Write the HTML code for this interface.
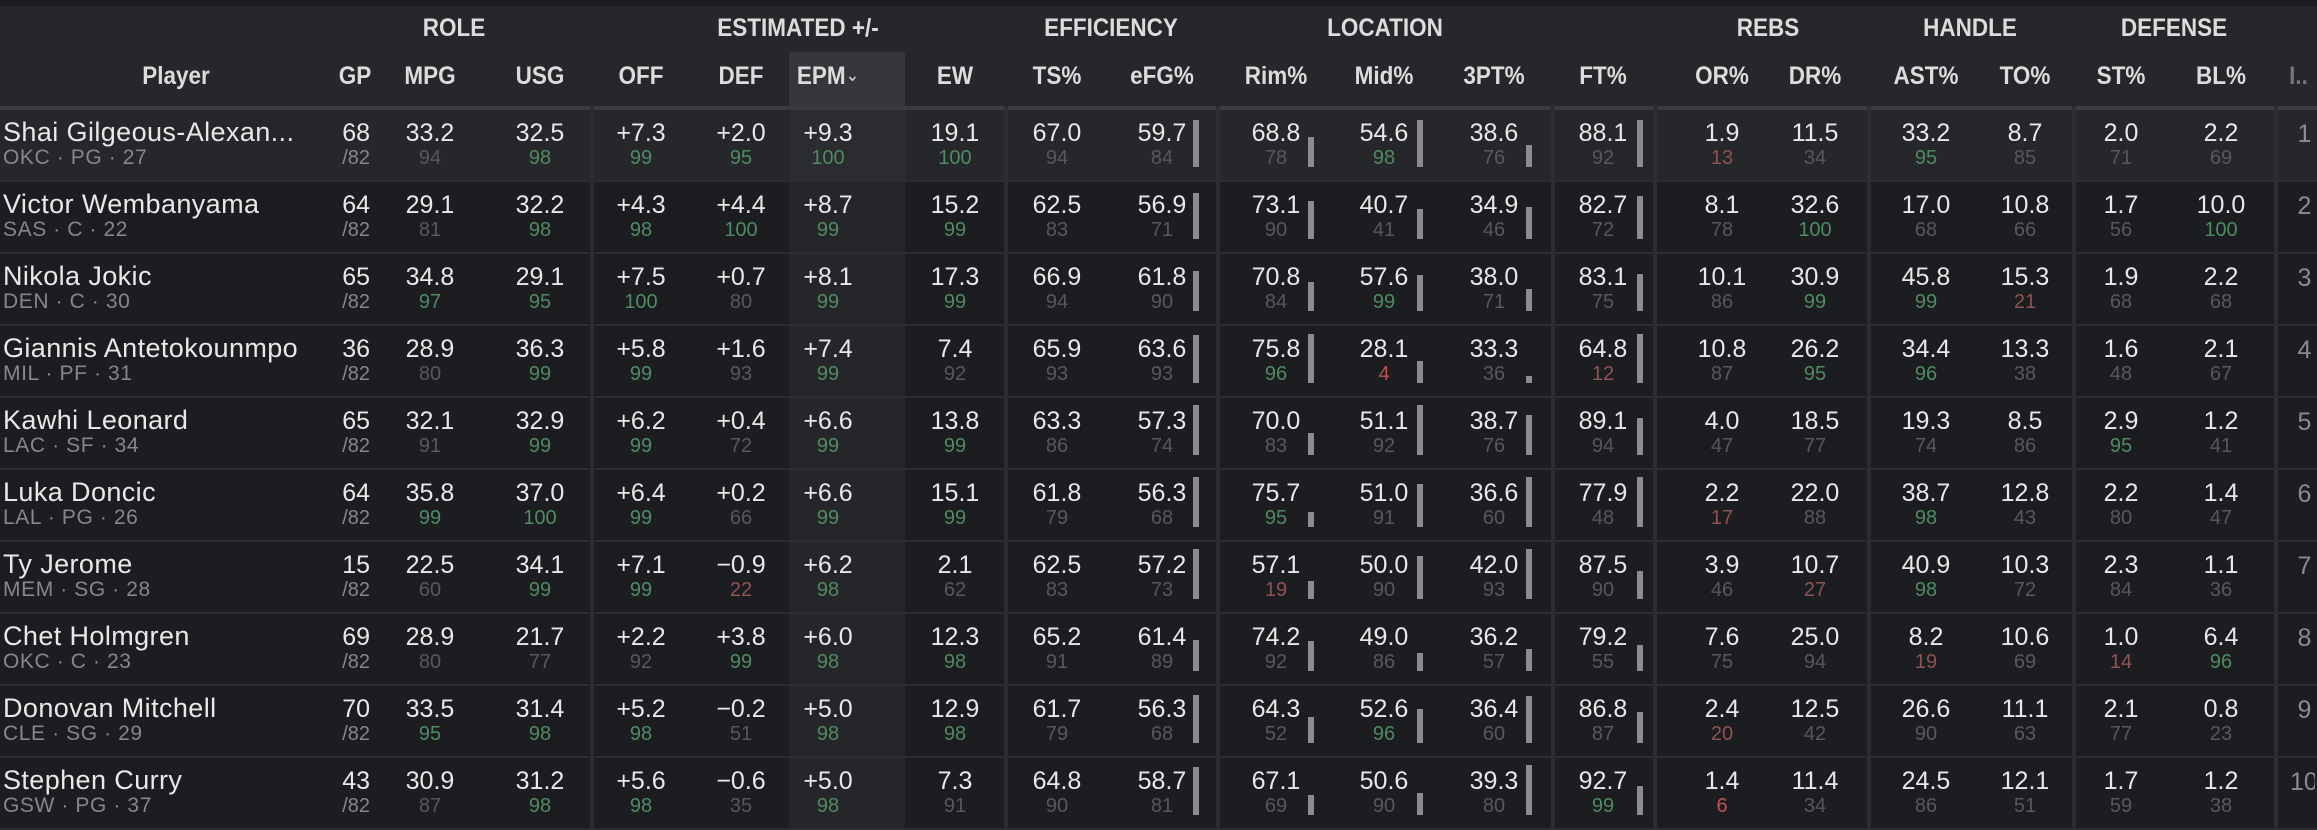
<!DOCTYPE html>
<html><head><meta charset="utf-8"><style>
*{margin:0;padding:0;box-sizing:border-box}
html,body{width:2317px;height:830px;overflow:hidden}
body{background:#2c2d31;font-family:"Liberation Sans",sans-serif;position:relative;color:#e8e8e8}
.top{position:absolute;left:0;top:0;width:2317px;height:6px;background:#1b1c1f}
.hd{position:absolute;left:0;top:6px;width:2317px;height:100px;background:#26272a}
.gh{position:absolute;top:14px;font-size:25px;color:#dcdcdc;width:300px;text-align:center;font-weight:bold;transform:scaleX(.9)}
.ch{position:absolute;top:62px;font-size:25px;color:#dcdcdc;width:120px;text-align:center;font-weight:bold;transform:scaleX(.9)}
.epmh{position:absolute;left:789px;top:52px;width:116px;height:54px;background:#35363a}
.ul{position:absolute;top:106px;height:4px;background:#3a3b3f}
.row{position:absolute;left:0;width:2317px;height:70px;background:#1c1d20;overflow:hidden}
.row.h{background:#26272a}
.vl{position:absolute;top:110px;height:720px;width:4px;background:#2c2d31}
.ep{position:absolute;top:0;left:789px;width:116px;height:70px;background:#25262a}
i{position:absolute;top:9px;width:120px;text-align:center;font-style:normal;font-size:25px;line-height:28px;color:#e8e8e8}
i b{display:block;font-weight:normal;font-size:20px;line-height:22px;color:#56585c}
i b.g{color:#4f8a63}
i b.r{color:#8e5353}
i b.rr{color:#c0504d}
.nm{position:absolute;left:3px;top:8px;font-size:27px;line-height:29px;color:#e8e8e8;white-space:nowrap;letter-spacing:0.4px}
.nm b{display:block;font-weight:normal;font-size:21px;line-height:22px;color:#85878a;letter-spacing:0.6px}
.gp{position:absolute;left:310px;width:60px;top:9px;text-align:right;font-size:25px;line-height:28px}
.gp b{display:block;font-weight:normal;font-size:20px;line-height:22px;color:#85878a}
.bar{position:absolute;width:6px;bottom:13px;background:#8c8c8e}
.rk{position:absolute;left:2292px;top:10px;font-size:25px;line-height:28px;color:#8c8c8e;width:25px;overflow:hidden;white-space:nowrap;text-align:center}
.c2{left:370px}.c3{left:480px}.c4{left:581px}.c5{left:681px}.c6{left:768px}.c7{left:895px}.c8{left:997px}.c9{left:1102px}.c10{left:1216px}.c11{left:1324px}.c12{left:1434px}.c13{left:1543px}.c14{left:1662px}.c15{left:1755px}.c16{left:1866px}.c17{left:1965px}.c18{left:2061px}.c19{left:2161px}
.b9{left:1193px}.b10{left:1308px}.b11{left:1417px}.b12{left:1526px}.b13{left:1637px}
</style></head><body>
<div class="top"></div>
<div class="hd"></div>
<div class="epmh"></div>
<div class="gh" style="left:304px">ROLE</div>
<div class="gh" style="left:648px">ESTIMATED +/-</div>
<div class="gh" style="left:961px">EFFICIENCY</div>
<div class="gh" style="left:1235px">LOCATION</div>
<div class="gh" style="left:1618px">REBS</div>
<div class="gh" style="left:1820px">HANDLE</div>
<div class="gh" style="left:2024px">DEFENSE</div>
<div class="ch" style="left:116px">Player</div>
<div class="ch" style="left:295px">GP</div>
<div class="ch c2">MPG</div><div class="ch c3">USG</div><div class="ch c4">OFF</div><div class="ch c5">DEF</div>
<div class="ch c6">EPM<span style="font-weight:normal;font-size:18px;position:relative;top:-3px">&#8964;</span></div>
<div class="ch c7">EW</div><div class="ch c8">TS%</div><div class="ch c9">eFG%</div><div class="ch c10">Rim%</div><div class="ch c11">Mid%</div><div class="ch c12">3PT%</div><div class="ch c13">FT%</div><div class="ch c14">OR%</div><div class="ch c15">DR%</div><div class="ch c16">AST%</div><div class="ch c17">TO%</div><div class="ch c18">ST%</div><div class="ch c19">BL%</div>
<div class="ch" style="left:2280px;width:37px;overflow:hidden;color:#777">I..</div>
<div class="ul" style="left:0;width:590px"></div><div class="ul" style="left:594px;width:410px"></div><div class="ul" style="left:1008px;width:208px"></div><div class="ul" style="left:1220px;width:331px"></div><div class="ul" style="left:1555px;width:98px"></div><div class="ul" style="left:1657px;width:210px"></div><div class="ul" style="left:1871px;width:201px"></div><div class="ul" style="left:2076px;width:198px"></div><div class="ul" style="left:2278px;width:39px"></div>

<div class="row h" style="top:110px"><div class="ep" style="background:#2b2c30"></div>
<div class="nm">Shai Gilgeous-Alexan...<b>OKC · PG · 27</b></div><div class="gp">68<b>/82</b></div>
<i class="c2">33.2<b>94</b></i><i class="c3">32.5<b class="g">98</b></i><i class="c4">+7.3<b class="g">99</b></i><i class="c5">+2.0<b class="g">95</b></i><i class="c6">+9.3<b class="g">100</b></i><i class="c7">19.1<b class="g">100</b></i><i class="c8">67.0<b>94</b></i><i class="c9">59.7<b>84</b></i><i class="c10">68.8<b>78</b></i><i class="c11">54.6<b class="g">98</b></i><i class="c12">38.6<b>76</b></i><i class="c13">88.1<b>92</b></i><i class="c14">1.9<b class="r">13</b></i><i class="c15">11.5<b>34</b></i><i class="c16">33.2<b class="g">95</b></i><i class="c17">8.7<b>85</b></i><i class="c18">2.0<b>71</b></i><i class="c19">2.2<b>69</b></i><div class="rk">1</div>
<div class="bar b9" style="height:47px"></div><div class="bar b10" style="height:30px"></div><div class="bar b11" style="height:47px"></div><div class="bar b12" style="height:22px"></div><div class="bar b13" style="height:47px"></div></div>

<div class="row" style="top:182px"><div class="ep"></div>
<div class="nm">Victor Wembanyama<b>SAS · C · 22</b></div><div class="gp">64<b>/82</b></div>
<i class="c2">29.1<b>81</b></i><i class="c3">32.2<b class="g">98</b></i><i class="c4">+4.3<b class="g">98</b></i><i class="c5">+4.4<b class="g">100</b></i><i class="c6">+8.7<b class="g">99</b></i><i class="c7">15.2<b class="g">99</b></i><i class="c8">62.5<b>83</b></i><i class="c9">56.9<b>71</b></i><i class="c10">73.1<b>90</b></i><i class="c11">40.7<b>41</b></i><i class="c12">34.9<b>46</b></i><i class="c13">82.7<b>72</b></i><i class="c14">8.1<b>78</b></i><i class="c15">32.6<b class="g">100</b></i><i class="c16">17.0<b>68</b></i><i class="c17">10.8<b>66</b></i><i class="c18">1.7<b>56</b></i><i class="c19">10.0<b class="g">100</b></i><div class="rk">2</div>
<div class="bar b9" style="height:46px"></div><div class="bar b10" style="height:38px"></div><div class="bar b11" style="height:30px"></div><div class="bar b12" style="height:32px"></div><div class="bar b13" style="height:43px"></div></div>

<div class="row" style="top:254px"><div class="ep"></div>
<div class="nm">Nikola Jokic<b>DEN · C · 30</b></div><div class="gp">65<b>/82</b></div>
<i class="c2">34.8<b class="g">97</b></i><i class="c3">29.1<b class="g">95</b></i><i class="c4">+7.5<b class="g">100</b></i><i class="c5">+0.7<b>80</b></i><i class="c6">+8.1<b class="g">99</b></i><i class="c7">17.3<b class="g">99</b></i><i class="c8">66.9<b>94</b></i><i class="c9">61.8<b>90</b></i><i class="c10">70.8<b>84</b></i><i class="c11">57.6<b class="g">99</b></i><i class="c12">38.0<b>71</b></i><i class="c13">83.1<b>75</b></i><i class="c14">10.1<b>86</b></i><i class="c15">30.9<b class="g">99</b></i><i class="c16">45.8<b class="g">99</b></i><i class="c17">15.3<b class="r">21</b></i><i class="c18">1.9<b>68</b></i><i class="c19">2.2<b>68</b></i><div class="rk">3</div>
<div class="bar b9" style="height:40px"></div><div class="bar b10" style="height:29px"></div><div class="bar b11" style="height:36px"></div><div class="bar b12" style="height:22px"></div><div class="bar b13" style="height:37px"></div></div>

<div class="row" style="top:326px"><div class="ep"></div>
<div class="nm">Giannis Antetokounmpo<b>MIL · PF · 31</b></div><div class="gp">36<b>/82</b></div>
<i class="c2">28.9<b>80</b></i><i class="c3">36.3<b class="g">99</b></i><i class="c4">+5.8<b class="g">99</b></i><i class="c5">+1.6<b>93</b></i><i class="c6">+7.4<b class="g">99</b></i><i class="c7">7.4<b>92</b></i><i class="c8">65.9<b>93</b></i><i class="c9">63.6<b>93</b></i><i class="c10">75.8<b class="g">96</b></i><i class="c11">28.1<b class="rr">4</b></i><i class="c12">33.3<b>36</b></i><i class="c13">64.8<b class="r">12</b></i><i class="c14">10.8<b>87</b></i><i class="c15">26.2<b class="g">95</b></i><i class="c16">34.4<b class="g">96</b></i><i class="c17">13.3<b>38</b></i><i class="c18">1.6<b>48</b></i><i class="c19">2.1<b>67</b></i><div class="rk">4</div>
<div class="bar b9" style="height:48px"></div><div class="bar b10" style="height:49px"></div><div class="bar b11" style="height:22px"></div><div class="bar b12" style="height:7px"></div><div class="bar b13" style="height:49px"></div></div>

<div class="row" style="top:398px"><div class="ep"></div>
<div class="nm">Kawhi Leonard<b>LAC · SF · 34</b></div><div class="gp">65<b>/82</b></div>
<i class="c2">32.1<b>91</b></i><i class="c3">32.9<b class="g">99</b></i><i class="c4">+6.2<b class="g">99</b></i><i class="c5">+0.4<b>72</b></i><i class="c6">+6.6<b class="g">99</b></i><i class="c7">13.8<b class="g">99</b></i><i class="c8">63.3<b>86</b></i><i class="c9">57.3<b>74</b></i><i class="c10">70.0<b>83</b></i><i class="c11">51.1<b>92</b></i><i class="c12">38.7<b>76</b></i><i class="c13">89.1<b>94</b></i><i class="c14">4.0<b>47</b></i><i class="c15">18.5<b>77</b></i><i class="c16">19.3<b>74</b></i><i class="c17">8.5<b>86</b></i><i class="c18">2.9<b class="g">95</b></i><i class="c19">1.2<b>41</b></i><div class="rk">5</div>
<div class="bar b9" style="height:50px"></div><div class="bar b10" style="height:22px"></div><div class="bar b11" style="height:50px"></div><div class="bar b12" style="height:40px"></div><div class="bar b13" style="height:37px"></div></div>

<div class="row" style="top:470px"><div class="ep"></div>
<div class="nm">Luka Doncic<b>LAL · PG · 26</b></div><div class="gp">64<b>/82</b></div>
<i class="c2">35.8<b class="g">99</b></i><i class="c3">37.0<b class="g">100</b></i><i class="c4">+6.4<b class="g">99</b></i><i class="c5">+0.2<b>66</b></i><i class="c6">+6.6<b class="g">99</b></i><i class="c7">15.1<b class="g">99</b></i><i class="c8">61.8<b>79</b></i><i class="c9">56.3<b>68</b></i><i class="c10">75.7<b class="g">95</b></i><i class="c11">51.0<b>91</b></i><i class="c12">36.6<b>60</b></i><i class="c13">77.9<b>48</b></i><i class="c14">2.2<b class="r">17</b></i><i class="c15">22.0<b>88</b></i><i class="c16">38.7<b class="g">98</b></i><i class="c17">12.8<b>43</b></i><i class="c18">2.2<b>80</b></i><i class="c19">1.4<b>47</b></i><div class="rk">6</div>
<div class="bar b9" style="height:50px"></div><div class="bar b10" style="height:15px"></div><div class="bar b11" style="height:43px"></div><div class="bar b12" style="height:50px"></div><div class="bar b13" style="height:50px"></div></div>

<div class="row" style="top:542px"><div class="ep"></div>
<div class="nm">Ty Jerome<b>MEM · SG · 28</b></div><div class="gp">15<b>/82</b></div>
<i class="c2">22.5<b>60</b></i><i class="c3">34.1<b class="g">99</b></i><i class="c4">+7.1<b class="g">99</b></i><i class="c5">−0.9<b class="r">22</b></i><i class="c6">+6.2<b class="g">98</b></i><i class="c7">2.1<b>62</b></i><i class="c8">62.5<b>83</b></i><i class="c9">57.2<b>73</b></i><i class="c10">57.1<b class="r">19</b></i><i class="c11">50.0<b>90</b></i><i class="c12">42.0<b>93</b></i><i class="c13">87.5<b>90</b></i><i class="c14">3.9<b>46</b></i><i class="c15">10.7<b class="r">27</b></i><i class="c16">40.9<b class="g">98</b></i><i class="c17">10.3<b>72</b></i><i class="c18">2.3<b>84</b></i><i class="c19">1.1<b>36</b></i><div class="rk">7</div>
<div class="bar b9" style="height:50px"></div><div class="bar b10" style="height:18px"></div><div class="bar b11" style="height:43px"></div><div class="bar b12" style="height:50px"></div><div class="bar b13" style="height:28px"></div></div>

<div class="row" style="top:614px"><div class="ep"></div>
<div class="nm">Chet Holmgren<b>OKC · C · 23</b></div><div class="gp">69<b>/82</b></div>
<i class="c2">28.9<b>80</b></i><i class="c3">21.7<b>77</b></i><i class="c4">+2.2<b>92</b></i><i class="c5">+3.8<b class="g">99</b></i><i class="c6">+6.0<b class="g">98</b></i><i class="c7">12.3<b class="g">98</b></i><i class="c8">65.2<b>91</b></i><i class="c9">61.4<b>89</b></i><i class="c10">74.2<b>92</b></i><i class="c11">49.0<b>86</b></i><i class="c12">36.2<b>57</b></i><i class="c13">79.2<b>55</b></i><i class="c14">7.6<b>75</b></i><i class="c15">25.0<b>94</b></i><i class="c16">8.2<b class="r">19</b></i><i class="c17">10.6<b>69</b></i><i class="c18">1.0<b class="r">14</b></i><i class="c19">6.4<b class="g">96</b></i><div class="rk">8</div>
<div class="bar b9" style="height:31px"></div><div class="bar b10" style="height:30px"></div><div class="bar b11" style="height:18px"></div><div class="bar b12" style="height:22px"></div><div class="bar b13" style="height:26px"></div></div>

<div class="row" style="top:686px"><div class="ep"></div>
<div class="nm">Donovan Mitchell<b>CLE · SG · 29</b></div><div class="gp">70<b>/82</b></div>
<i class="c2">33.5<b class="g">95</b></i><i class="c3">31.4<b class="g">98</b></i><i class="c4">+5.2<b class="g">98</b></i><i class="c5">−0.2<b>51</b></i><i class="c6">+5.0<b class="g">98</b></i><i class="c7">12.9<b class="g">98</b></i><i class="c8">61.7<b>79</b></i><i class="c9">56.3<b>68</b></i><i class="c10">64.3<b>52</b></i><i class="c11">52.6<b class="g">96</b></i><i class="c12">36.4<b>60</b></i><i class="c13">86.8<b>87</b></i><i class="c14">2.4<b class="r">20</b></i><i class="c15">12.5<b>42</b></i><i class="c16">26.6<b>90</b></i><i class="c17">11.1<b>63</b></i><i class="c18">2.1<b>77</b></i><i class="c19">0.8<b>23</b></i><div class="rk">9</div>
<div class="bar b9" style="height:48px"></div><div class="bar b10" style="height:26px"></div><div class="bar b11" style="height:34px"></div><div class="bar b12" style="height:47px"></div><div class="bar b13" style="height:31px"></div></div>

<div class="row" style="top:758px"><div class="ep"></div>
<div class="nm">Stephen Curry<b>GSW · PG · 37</b></div><div class="gp">43<b>/82</b></div>
<i class="c2">30.9<b>87</b></i><i class="c3">31.2<b class="g">98</b></i><i class="c4">+5.6<b class="g">98</b></i><i class="c5">−0.6<b>35</b></i><i class="c6">+5.0<b class="g">98</b></i><i class="c7">7.3<b>91</b></i><i class="c8">64.8<b>90</b></i><i class="c9">58.7<b>81</b></i><i class="c10">67.1<b>69</b></i><i class="c11">50.6<b>90</b></i><i class="c12">39.3<b>80</b></i><i class="c13">92.7<b class="g">99</b></i><i class="c14">1.4<b class="rr">6</b></i><i class="c15">11.4<b>34</b></i><i class="c16">24.5<b>86</b></i><i class="c17">12.1<b>51</b></i><i class="c18">1.7<b>59</b></i><i class="c19">1.2<b>38</b></i><div class="rk" style="left:2290px;text-align:left">10</div>
<div class="bar b9" style="height:48px"></div><div class="bar b10" style="height:20px"></div><div class="bar b11" style="height:22px"></div><div class="bar b12" style="height:50px"></div><div class="bar b13" style="height:29px"></div></div>

<div class="vl" style="left:590px"></div><div class="vl" style="left:1004px"></div><div class="vl" style="left:1216px"></div><div class="vl" style="left:1551px"></div><div class="vl" style="left:1653px"></div><div class="vl" style="left:1867px"></div><div class="vl" style="left:2072px"></div><div class="vl" style="left:2274px"></div>
</body></html>
